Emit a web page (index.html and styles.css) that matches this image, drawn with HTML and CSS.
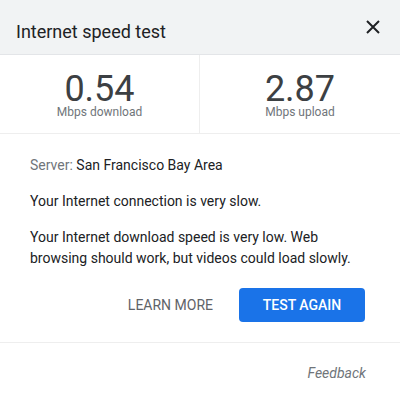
FILE: index.html
```html
<!DOCTYPE html>
<html lang="en">
<head>
<meta charset="UTF-8" />
<meta name="viewport" content="width=device-width, initial-scale=1" />
<title>Internet speed test</title>
<link rel="stylesheet" href="styles.css">
</head>
<body>

<div class="dialog">
  <header class="dialog-head">
    <div class="title">Internet speed test</div>
    <button class="close-btn" aria-label="Close">
      <svg width="14" height="14" viewBox="0 0 14 14">
        <path d="M1 1L13 13M13 1L1 13" stroke="#202124" stroke-width="2" fill="none" />
      </svg>
    </button>
  </header>

  <div class="stats">
    <div class="stat">
      <div class="stat-value">0.54</div>
      <div class="stat-label">Mbps download</div>
    </div>
    <div class="stat">
      <div class="stat-value">2.87</div>
      <div class="stat-label">Mbps upload</div>
    </div>
  </div>

  <section class="result">
    <p class="server"><span class="muted">Server:</span> San Francisco Bay Area</p>
    <p>Your Internet connection is very slow.</p>
    <p>Your Internet download speed is very low. Web browsing should work, but videos could load slowly.</p>

    <div class="actions">
      <button class="text-btn">LEARN MORE</button>
      <button class="primary-btn">TEST AGAIN</button>
    </div>
  </section>

  <footer class="dialog-foot">
    <a href="#" class="feedback">Feedback</a>
  </footer>
</div>

</body>
</html>
```

FILE: styles.css
```css
body {
  margin: 0;
  padding: 0;
  background: #fff;
  font-family: Roboto, "Liberation Sans", Arial, sans-serif;
  color: #202124;
}
.dialog {
  width: 400px;
  height: 400px;
  background: #fff;
}
.dialog-head {
  background: #f1f3f4;
  border-bottom: 1px solid #e3e5e8;
  height: 55px;
  box-sizing: border-box;
  padding: 20px 15px 0 16px;
  display: flex;
  justify-content: space-between;
  align-items: flex-start;
}
.dialog-head .title {
  font-size: 18px;
  line-height: 24px;
  color: #202124;
}
.close-btn {
  width: 24px;
  height: 24px;
  margin-top: -5px;
  padding: 0;
  border: none;
  background: none;
  display: flex;
  align-items: center;
  justify-content: center;
  cursor: pointer;
}
.stats {
  display: grid;
  grid-template-columns: 1fr 1fr;
  border-bottom: 1px solid #eeeeee;
}
.stat {
  text-align: center;
  padding: 17px 0 15px;
}
.stat:first-child {
  border-right: 1px solid #eeeeee;
}
.stat-value {
  font-size: 36px;
  line-height: 34px;
  color: #3c4043;
}
.stat-label {
  font-size: 12px;
  line-height: 12px;
  color: #70757a;
}
.result {
  padding: 21px 35px 20px 30px;
  border-bottom: 1px solid #eeeeee;
}
.result p {
  margin: 0 0 15px;
  font-size: 14px;
  line-height: 21px;
  color: #202124;
}
.result .muted {
  color: #70757a;
}
.actions {
  display: flex;
  justify-content: flex-end;
  align-items: center;
  gap: 10px;
  margin-top: 19px;
}
.actions button {
  font-family: inherit;
  font-size: 14px;
  height: 34px;
  border: none;
  border-radius: 4px;
  cursor: pointer;
}
.text-btn {
  background: none;
  color: #5f6368;
  padding: 0 16px;
}
.primary-btn {
  background: #1a73e8;
  color: #fff;
  font-weight: 500;
  width: 126px;
}
.dialog-foot {
  padding: 20px 34px 0 0;
  text-align: right;
}
.feedback {
  font-size: 14px;
  line-height: 21px;
  font-style: italic;
  color: #70757a;
  text-decoration: none;
}
```
